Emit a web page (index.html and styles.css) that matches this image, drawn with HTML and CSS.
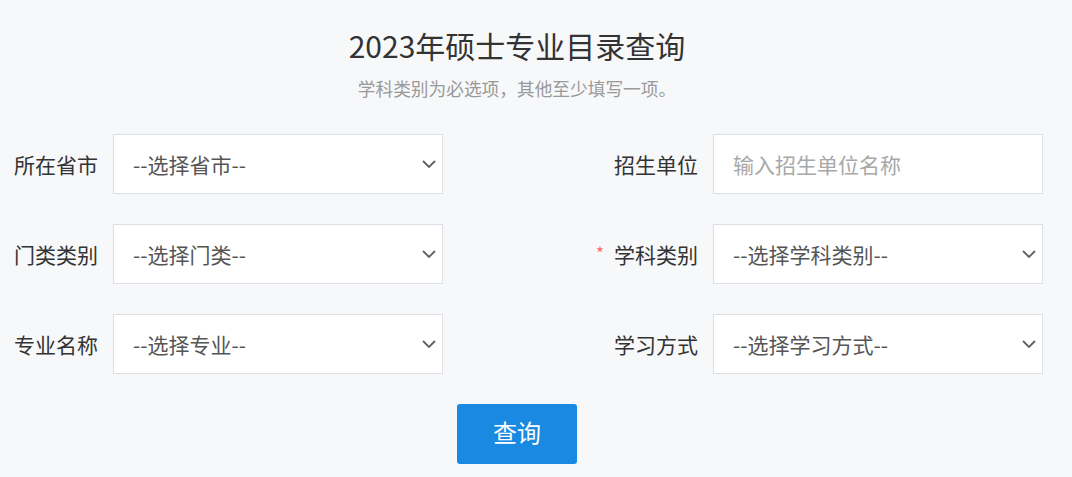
FILE: index.html
```html
<!DOCTYPE html>
<html lang="zh-CN">
<head>
<meta charset="utf-8">
<title>2023年硕士专业目录查询</title>
<link rel="stylesheet" href="styles.css">
</head>
<body>
<div class="page">
  <div class="header">
    <h1 class="title">2023年硕士专业目录查询</h1>
    <p class="subtitle">学科类别为必选项，其他至少填写一项。</p>
  </div>
  <div class="form">
    <label class="label">所在省市</label>
    <div class="select"><span class="value">--选择省市--</span><svg class="chev" viewBox="0 0 14 8" width="14" height="8"><path d="M1 1 L7 7 L13 1" fill="none" stroke="#5f5f5f" stroke-width="1.8"/></svg></div>
    <label class="label">招生单位</label>
    <div class="select"><span class="placeholder">输入招生单位名称</span></div>

    <label class="label">门类类别</label>
    <div class="select"><span class="value">--选择门类--</span><svg class="chev" viewBox="0 0 14 8" width="14" height="8"><path d="M1 1 L7 7 L13 1" fill="none" stroke="#5f5f5f" stroke-width="1.8"/></svg></div>
    <label class="label"><span class="req">*</span>学科类别</label>
    <div class="select"><span class="value">--选择学科类别--</span><svg class="chev" viewBox="0 0 14 8" width="14" height="8"><path d="M1 1 L7 7 L13 1" fill="none" stroke="#5f5f5f" stroke-width="1.8"/></svg></div>

    <label class="label">专业名称</label>
    <div class="select"><span class="value">--选择专业--</span><svg class="chev" viewBox="0 0 14 8" width="14" height="8"><path d="M1 1 L7 7 L13 1" fill="none" stroke="#5f5f5f" stroke-width="1.8"/></svg></div>
    <label class="label">学习方式</label>
    <div class="select"><span class="value">--选择学习方式--</span><svg class="chev" viewBox="0 0 14 8" width="14" height="8"><path d="M1 1 L7 7 L13 1" fill="none" stroke="#5f5f5f" stroke-width="1.8"/></svg></div>
  </div>
  <div class="actions">
    <button class="btn" type="button">查询</button>
  </div>
</div>
</body>
</html>
```

FILE: styles.css
```css
html, body {
  margin: 0;
  padding: 0;
  background: #f7f8fa;
  font-family: "Noto Sans CJK SC", "Noto Sans", sans-serif;
}
.page {
  width: 1072px;
  height: 477px;
  overflow: hidden;
}
.header {
  width: 1034px;
  text-align: center;
  padding-top: 25px;
}
.title {
  margin: 0;
  font-size: 30px;
  line-height: 40px;
  font-weight: 400;
  color: #333333;
}
.subtitle {
  margin: 11px 0 0;
  font-size: 17.7px;
  line-height: 24px;
  color: #999999;
}
.form {
  margin-top: 34px;
  display: grid;
  grid-template-columns: 113px 330px 270px 330px;
  grid-auto-rows: 60px;
  row-gap: 30px;
}
.label {
  display: flex;
  align-items: center;
  justify-content: flex-end;
  padding-right: 15px;
  font-size: 21px;
  color: #333333;
}
.req {
  color: #f56c6c;
  font-size: 17px;
  margin-right: 10px;
  position: relative;
  top: -2px;
}
.select {
  box-sizing: border-box;
  background: #ffffff;
  border: 1px solid #dcdfe6;
  display: flex;
  align-items: center;
  justify-content: space-between;
  padding: 0 6px 0 19px;
  font-size: 21px;
}
.value {
  color: #555555;
}
.placeholder {
  color: #a8a8a8;
}
.chev {
  display: block;
  width: 14px;
  height: 8px;
}
.actions {
  width: 1034px;
  display: flex;
  justify-content: center;
  margin-top: 30px;
}
.btn {
  width: 120px;
  height: 60px;
  border: none;
  border-radius: 3px;
  background: #1a89e1;
  color: #ffffff;
  font-family: "Noto Sans CJK SC", sans-serif;
  font-size: 24px;
  line-height: 56px;
  padding: 0 0 4px;
}
```
